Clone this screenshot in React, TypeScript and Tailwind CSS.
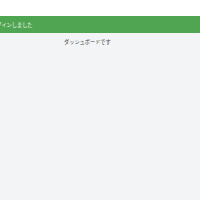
import React from "react";

export default function App() {
  return (
    <div
      className="w-[200px] h-[200px] overflow-hidden bg-white flex flex-col"
      style={{ fontFamily: '"Noto Sans CJK JP", "Noto Sans", sans-serif' }}
    >
      <div className="h-[16px] bg-white" />
      <div className="h-[17px] bg-[#4fa552] flex items-center overflow-hidden">
        <span className="ml-[-9px] whitespace-nowrap text-white text-[5.2px] leading-none">
          ログインしました
        </span>
      </div>
      <div className="flex-1 bg-[#f3f4f6] flex flex-col items-start pt-[6px] pl-[64px]">
        <span className="text-[#444] text-[5.2px] leading-none whitespace-nowrap">ダッシュボードです</span>
      </div>
    </div>
  );
}
